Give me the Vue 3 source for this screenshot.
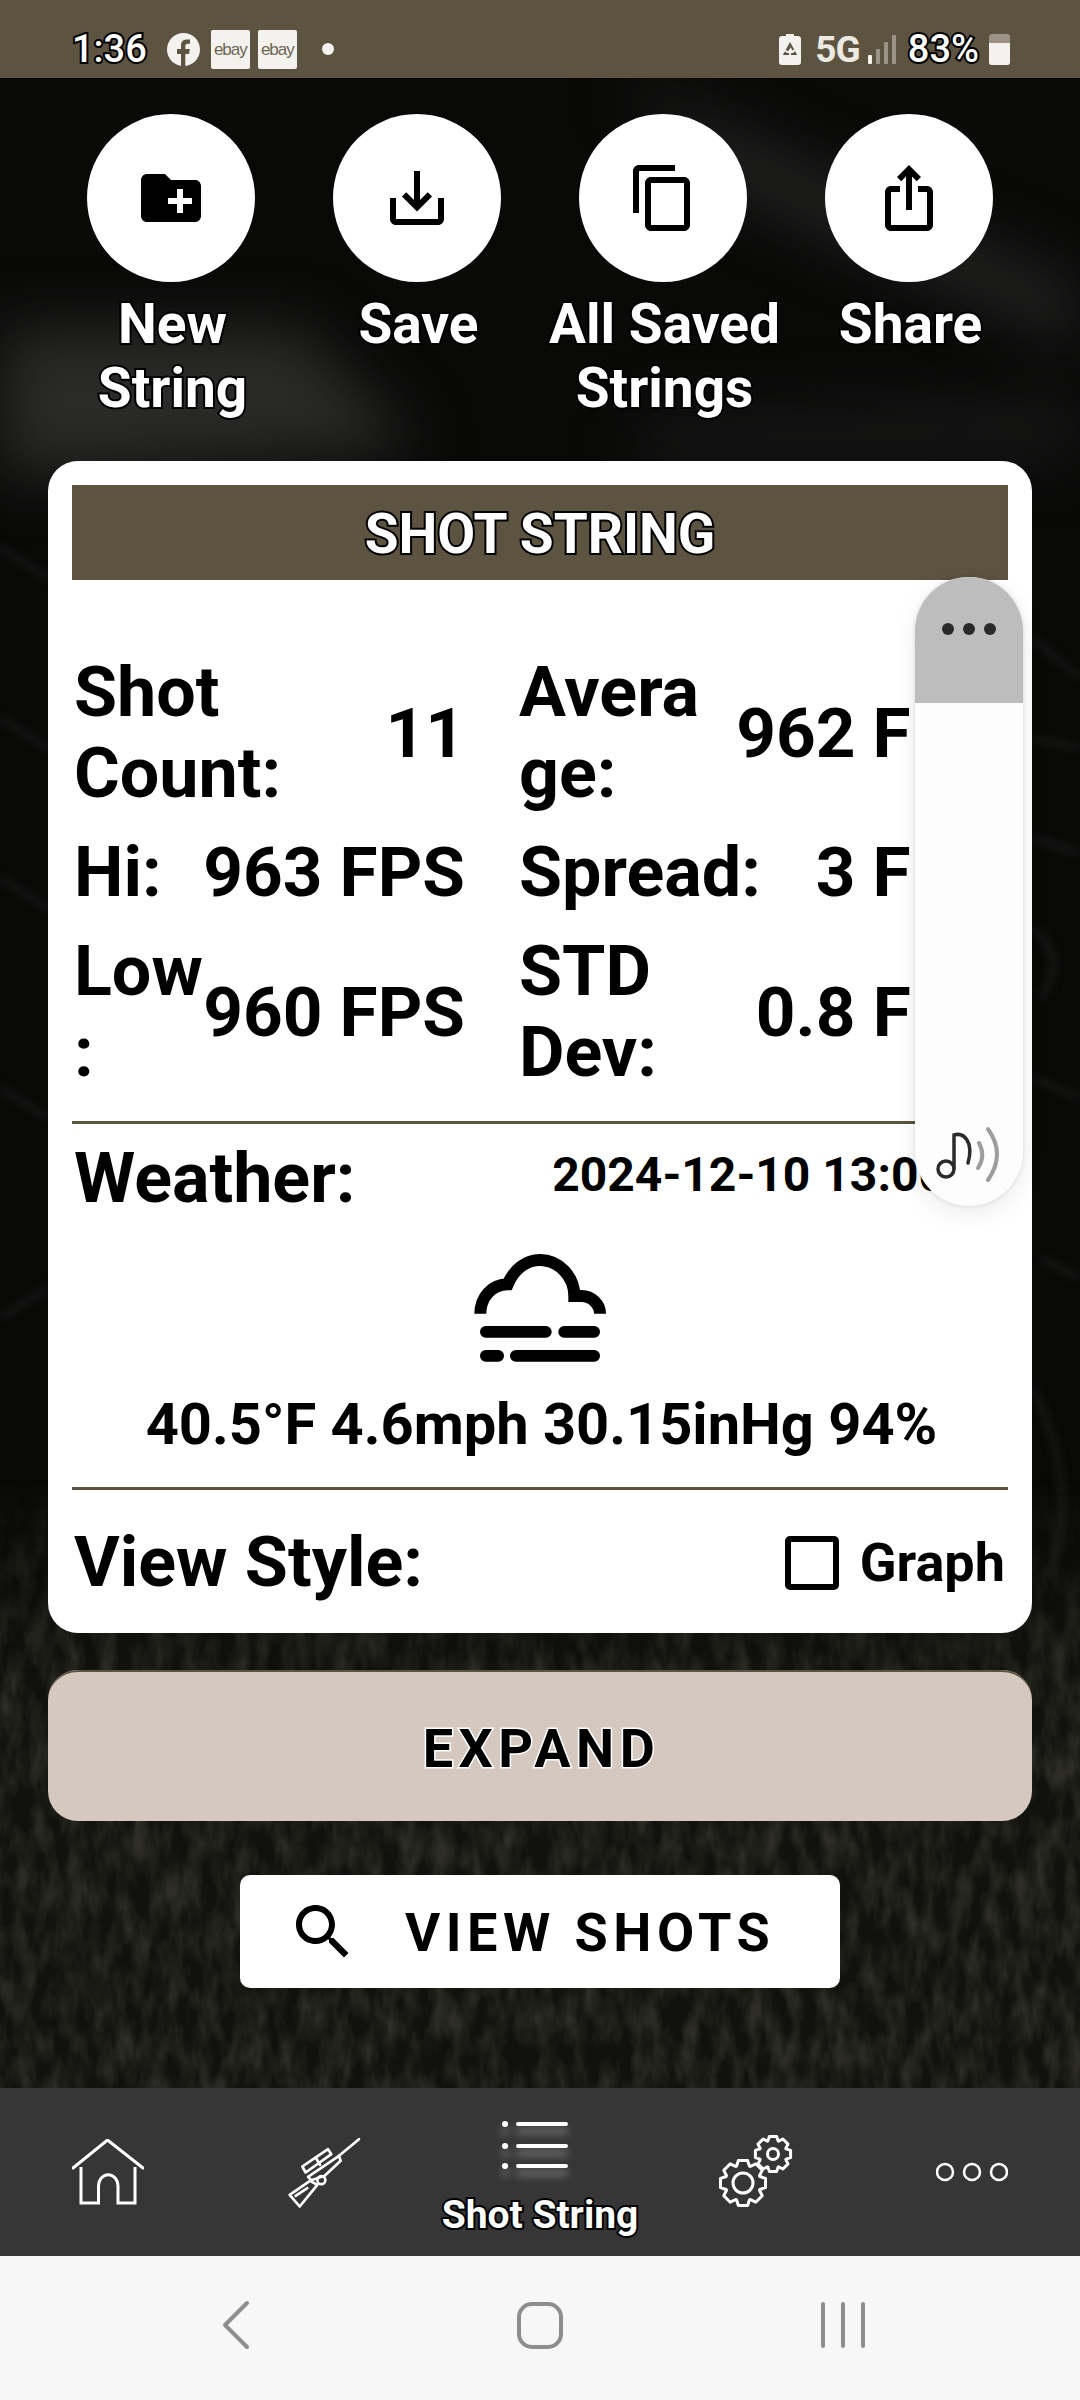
<template>
  <div class="phone">
    <div class="statusbar">
      <span class="time outlined">1:36</span>
      <svg class="fb" viewBox="0 0 33 33">
        <circle cx="16.5" cy="16.5" r="16.5" fill="#f3f2ef" />
        <path d="M14 33V21h-4v-5h4v-3.6C14 8.4 16.4 6.400 20 6.400c1.700 0 3 .2 3 .2v4.200h-2.200c-2 0-2.500 1.200-2.500 2.500V16h4.500l-.7 5h-3.800v12z" fill="#5c5340" />
      </svg>
      <span class="ebay">ebay</span>
      <span class="ebay">ebay</span>
      <span class="dot"></span>
      <span class="spacer"></span>
      <svg class="saver" viewBox="0 0 22 31">
        <path d="M7 0h8v2h4a3 3 0 0 1 3 3v23a3 3 0 0 1-3 3H3a3 3 0 0 1-3-3V5a3 3 0 0 1 3-3h4z" fill="#f3f2ef" />
        <path d="M11 10l-5.500 10h11zM8 17l3-4" fill="none" stroke="#5c5340" stroke-width="2" stroke-dasharray="7 2" />
      </svg>
      <span class="net">5G</span>
      <span class="signal">
        <i class="b1"></i><i class="b2"></i><i class="b3"></i><i class="b4"></i>
      </span>
      <span class="pct outlined">83%</span>
      <span class="battery"><i></i></span>
    </div>

    <div class="hero">
      <svg class="photo" viewBox="0 0 1080 2010" preserveAspectRatio="none">
        <defs>
          <filter id="soft" filterUnits="userSpaceOnUse" x="-200" y="-200" width="1500" height="2400" color-interpolation-filters="sRGB"><feGaussianBlur stdDeviation="30" /></filter>
          <filter id="soft2" filterUnits="userSpaceOnUse" x="-200" y="-200" width="1500" height="2400" color-interpolation-filters="sRGB"><feGaussianBlur stdDeviation="4" /></filter>
          <filter id="grass" x="0" y="0" width="100%" height="100%" color-interpolation-filters="sRGB">
            <feTurbulence type="fractalNoise" baseFrequency="0.06 0.024" numOctaves="3" seed="7" />
            <feColorMatrix type="matrix" values="0 0 0 0 .18  0 0 0 0 .18  0 0 0 0 .15  2.2 0 0 0 -.75" />
          </filter>
          <linearGradient id="fade" x1="0" y1="0" x2="0" y2="1">
            <stop offset="0" stop-color="#000" />
            <stop offset=".35" stop-color="#fff" />
            <stop offset="1" stop-color="#fff" />
          </linearGradient>
          <mask id="grassMask" maskUnits="userSpaceOnUse" x="0" y="1400" width="1080" height="610"><rect y="1400" width="1080" height="610" fill="url(#fade)" /></mask>
        </defs>
        <rect width="1080" height="2010" fill="#090908" />
        <path d="M0 250 L300 250 L420 370 L0 400z" fill="#2a2a28" filter="url(#soft)" />
        <path d="M620 0 L1080 210 L1080 270 L720 110z" fill="#232322" filter="url(#soft)" />
        <path d="M640 340 L1080 320 L1080 380 L640 390z" fill="#171716" filter="url(#soft)" />
        <g fill="none" stroke="#1c1c1b" stroke-width="5" filter="url(#soft2)">
          <path d="M0 470 L48 500M0 640 L48 670M0 800 L48 830M0 1010 L48 1040M0 1240 L48 1210" />
          <path d="M1032 560 L1080 600M1032 660 L1080 670M1032 760 L1080 775M1032 850 Q1070 880 1040 920M1032 1000 L1080 1020M1040 1180 L1080 1200M1032 1310 Q1080 1400 1050 1500" />
        </g>
        <rect y="1400" width="1080" height="610" fill="#11110e" mask="url(#grassMask)" />
        <rect y="1400" width="1080" height="610" filter="url(#grass)" mask="url(#grassMask)" />
      </svg>

      <div class="actions">
        <div v-for="a in actions" :key="a.label" class="action">
          <span class="round">
            <svg viewBox="0 0 24 24" class="round-icon"><path :d="a.icon" /></svg>
          </span>
          <span class="action-label outlined">{{ a.label }}</span>
        </div>
      </div>

      <div class="card">
        <div class="card-head outlined">SHOT STRING</div>
        <div class="stats">
          <div v-for="s in stats" :key="s.label" class="stat">
            <span class="stat-label">{{ s.label }}</span>
            <span class="stat-value">{{ s.value }}</span>
          </div>
        </div>
        <div class="rule"></div>
        <div class="weather-top">
          <span class="big">Weather:</span>
          <span class="date">2024-12-10 13:00</span>
        </div>
        <svg class="fog" viewBox="0 0 600 420">
          <path d="M121 248C121 200 155 160 203 160 222 115 258 87 300 87 355 87 403 135 403 195H425C455 195 480 220 480 248" fill="none" stroke="#000" stroke-width="36" />
          <rect x="120" y="285" width="215" height="35" rx="17" />
          <rect x="355" y="285" width="125" height="35" rx="17" />
          <rect x="120" y="357" width="72" height="35" rx="17" />
          <rect x="210" y="357" width="270" height="35" rx="17" />
        </svg>
        <div class="summary">40.5°F 4.6mph 30.15inHg 94%</div>
        <div class="rule"></div>
        <div class="view-row">
          <span class="big">View Style:</span>
          <span class="graph"><i class="check"></i>Graph</span>
        </div>
      </div>

      <div class="expand">EXPAND</div>

      <div class="view-shots">
        <svg viewBox="0 0 24 24" class="search"><path d="M15.500 14h-.79l-.28-.27C15.410 12.590 16 11.110 16 9.500 16 5.910 13.090 3 9.500 3S3 5.910 3 9.500 5.910 16 9.500 16c1.610 0 3.090-.59 4.230-1.570l.27.28v.79l5 4.990L20.490 19l-4.990-5zm-6 0C7.010 14 5 11.990 5 9.500S7.010 5 9.500 5 14 7.010 14 9.500 11.990 14 9.500 14z" /></svg>
        <span>VIEW SHOTS</span>
      </div>
    </div>

    <div class="tabs">
      <div class="tab">
        <svg width="72" height="66" viewBox="0 0 72 66" fill="none" stroke="#fff" stroke-width="3">
          <path d="M1 29L35.500 1 71 29" stroke-linecap="round" />
          <path d="M9 28V64H26.500V47A9.500 11 0 0 1 46 47V64H63V28" />
        </svg>
      </div>
      <div class="tab">
        <svg width="80" height="77" viewBox="100 100 240 230" fill="none" stroke="#fff" stroke-width="8" stroke-linejoin="round" stroke-linecap="round">
          <path d="M325 115L265 165" />
          <path d="M172 228L265 165 270 180 222 225 182 238z" />
          <path d="M155 197L232 145 242 160 165 215z" />
          <path d="M195 170L208 192" />
          <circle cx="212" cy="238" r="12" />
          <path d="M117 282L178 240 200 252 147 317z" />
          <path d="M135 285L170 262" />
        </svg>
      </div>
      <div class="tab tab-active">
        <svg class="list-icon" width="68" height="52" viewBox="0 0 68 52" fill="none" stroke="#fff" stroke-width="4" stroke-linecap="round">
          <path d="M16 3H64M16 25H64M16 45H64" />
          <path d="M3 3h.1M3 25h.1M3 45h.1" stroke-width="6" />
        </svg>
        <span class="tab-label outlined">Shot String</span>
      </div>
      <div class="tab">
        <svg width="76" height="76" viewBox="0 0 76 76" fill="none" stroke="#fff" stroke-width="3" stroke-linejoin="round">
          <path :d="gearBig" />
          <circle cx="25" cy="49" r="10" />
          <path :d="gearSmall" />
          <circle cx="55" cy="20" r="5.500" />
        </svg>
      </div>
      <div class="tab">
        <svg width="72" height="20" viewBox="0 0 72 20" fill="none" stroke="#fff" stroke-width="2.500">
          <ellipse cx="9" cy="10" rx="8" ry="8" />
          <ellipse cx="36" cy="10" rx="8" ry="8" />
          <ellipse cx="63" cy="10" rx="8" ry="8" />
        </svg>
      </div>
    </div>

    <div class="sysnav">
      <svg width="30" height="50" viewBox="0 0 30 50" fill="none" stroke="#8e8e8e" stroke-width="4" stroke-linecap="round" stroke-linejoin="round"><path d="M25 3L3 25 25 47" /></svg>
      <span class="sys-home"></span>
      <span class="sys-recent"><i></i><i></i><i></i></span>
    </div>

    <div class="sound-panel">
      <div class="panel-top"><i></i><i></i><i></i></div>
      <svg class="note" width="68" height="58" viewBox="0 0 68 58" fill="none" stroke-linecap="round">
        <circle cx="10" cy="43" r="8" stroke="#2b2b2b" stroke-width="3.500" />
        <path d="M18 42V9C28 6 38 16 32 37" stroke="#2b2b2b" stroke-width="3.500" />
        <path d="M43 17Q50 30 42 42" stroke="#9d9d9d" stroke-width="4" />
        <path d="M52 3Q70 28 52 54" stroke="#9d9d9d" stroke-width="4" />
      </svg>
    </div>
  </div>
</template>

<script setup>
const actions = [
  { label: "New String", icon: "M20 6h-8l-2-2H4c-1.110 0-1.990.89-1.990 2L2 18c0 1.110.89 2 2 2h16c1.110 0 2-.89 2-2V8c0-1.110-.89-2-2-2zm-1 8h-3v3h-2v-3h-3v-2h3V9h2v3h3v2z" },
  { label: "Save", icon: "M19 12v7H5v-7H3v7c0 1.100.9 2 2 2h14c1.100 0 2-.9 2-2v-7h-2zm-6 .67l2.590-2.580L17 11.500l-5 5-5-5 1.410-1.410L11 12.670V3h2z" },
  { label: "All Saved Strings", icon: "M16 1H4c-1.100 0-2 .9-2 2v14h2V3h12V1zm3 4H8c-1.100 0-2 .9-2 2v14c0 1.100.9 2 2 2h11c1.100 0 2-.9 2-2V7c0-1.100-.9-2-2-2zm0 16H8V7h11v14z" },
  { label: "Share", icon: "M16 5l-1.420 1.420-1.590-1.590V16h-1.980V4.830L9.420 6.420 8 5l4-4 4 4zm4 5v11c0 1.100-.9 2-2 2H6c-1.110 0-2-.9-2-2V10c0-1.110.89-2 2-2h3v2H6v11h12V10h-3V8h3c1.100 0 2 .89 2 2z" },
];

const stats = [
  { label: "Shot Count:", value: "11" },
  { label: "Average:", value: "962 FPS" },
  { label: "Hi:", value: "963 FPS" },
  { label: "Spread:", value: "3 FPS" },
  { label: "Low:", value: "960 FPS" },
  { label: "STD Dev:", value: "0.8 FPS" },
];

// 8 tooth gear outline, the round line join softens the corners
const gear = (cx, cy, outer, inner) => {
  const pts = [];
  for (let i = 0; i < 8; i++) {
    const a = (i * Math.PI) / 4 - Math.PI / 2;
    const w = 0.2;
    [[inner, a - 0.39 + 0.02], [outer, a - w], [outer, a + w], [inner, a + 0.37]].forEach(([r, t]) => {
      pts.push((cx + r * Math.cos(t)).toFixed(1) + " " + (cy + r * Math.sin(t)).toFixed(1));
    });
  }
  return "M" + pts.join("L") + "z";
};
const gearBig = gear(25, 49, 23, 18);
const gearSmall = gear(55, 20, 18, 14);
</script>

<style scoped>
.phone {
  position: relative;
  width: 1080px;
  height: 2400px;
  display: flex;
  flex-direction: column;
  overflow: hidden;
  font-family: Roboto, "Liberation Sans", sans-serif;
  color: #000;
}

.outlined {
  color: #fff;
  -webkit-text-stroke: 4px #000;
  paint-order: stroke fill;
}

.statusbar {
  height: 78px;
  flex: none;
  background: #5c5340;
  display: flex;
  align-items: center;
  padding: 20px 70px 0 72px;
  box-sizing: border-box;
}
.time, .pct {
  font-size: 38px;
  font-weight: 500;
  line-height: 44px;
}
.fb {
  width: 33px;
  height: 33px;
  margin-left: 20px;
}
.ebay {
  width: 39px;
  height: 39px;
  margin-left: 8px;
  background: #f3f2ef;
  border-radius: 2px;
  font: 17px/39px "Liberation Sans", sans-serif;
  letter-spacing: -1px;
  color: #6d6552;
  text-align: center;
}
.fb + .ebay {
  margin-left: 11px;
}
.dot {
  width: 12px;
  height: 12px;
  border-radius: 50%;
  background: #f3f2ef;
  margin-left: 25px;
}
.spacer {
  flex: 1;
}
.saver {
  width: 22px;
  height: 31px;
}
.net {
  margin-left: 14px;
  font-size: 37px;
  font-weight: 700;
  color: #ece9e2;
  letter-spacing: -1px;
}
.signal {
  display: flex;
  align-items: flex-end;
  gap: 4px;
  height: 29px;
  margin-left: 8px;
}
.signal i {
  width: 4px;
  background: #9b9486;
  border-radius: 1px;
}
.signal .b1 { height: 9px; background: #f3f2ef; }
.signal .b2 { height: 15px; }
.signal .b3 { height: 22px; }
.signal .b4 { height: 29px; }
.pct {
  margin-left: 12px;
}
.battery {
  width: 21px;
  height: 31px;
  margin-left: 10px;
  border-radius: 3px;
  background: #9b9486;
  display: flex;
  align-items: flex-end;
}
.battery i {
  width: 100%;
  height: 22px;
  background: #f3f2ef;
  border-radius: 0 0 3px 3px;
}

.hero {
  position: relative;
  height: 2010px;
  flex: none;
  display: flex;
  flex-direction: column;
  align-items: center;
  padding: 36px 48px 0;
  box-sizing: border-box;
}
.photo {
  position: absolute;
  inset: 0;
  width: 100%;
  height: 100%;
}
.actions {
  position: relative;
  width: 984px;
  height: 347px;
  flex: none;
  display: grid;
  grid-template-columns: repeat(4, 1fr);
}
.action {
  display: flex;
  flex-direction: column;
  align-items: center;
}
.round {
  width: 168px;
  height: 168px;
  border-radius: 50%;
  background: #fff;
  display: flex;
  align-items: center;
  justify-content: center;
}
.round-icon {
  width: 72px;
  height: 72px;
}
.action-label {
  margin-top: 10px;
  width: 240px;
  padding-left: 3px;
  text-align: center;
  font-size: 55px;
  line-height: 64px;
  font-weight: 700;
}

.card {
  position: relative;
  width: 984px;
  height: 1172px;
  flex: none;
  box-sizing: border-box;
  background: #fff;
  border-radius: 30px;
  padding: 24px;
}
.card-head {
  height: 95px;
  background: #5c5340;
  text-align: center;
  font-size: 55px;
  font-weight: 700;
  line-height: 98px;
}
.stats {
  display: grid;
  grid-template-columns: 391px 479px;
  column-gap: 54px;
  row-gap: 18px;
  padding: 72px 0 0 2px;
}
.stat {
  display: flex;
  justify-content: space-between;
  align-items: center;
  font-size: 70px;
  line-height: 81px;
  font-weight: 700;
}
.stat-label {
  min-width: 0;
  overflow-wrap: anywhere;
}
.stat-value {
  flex: none;
  font-size: 69.300px;
}
.rule {
  height: 3px;
  background: #5c5340;
  margin-top: 28px;
}
.weather-top {
  display: flex;
  justify-content: space-between;
  align-items: center;
  padding: 14px 62px 0 2px;
}
.big {
  font-size: 70px;
  line-height: 81px;
  font-weight: 700;
}
.date {
  font-size: 48px;
  font-weight: 700;
  white-space: nowrap;
  margin-bottom: 8px;
}
.fog {
  display: block;
  width: 200px;
  height: 140px;
  margin: 12px auto 0;
}
.summary {
  margin-top: 20px;
  padding-left: 3px;
  text-align: center;
  font-size: 57.800px;
  line-height: 66px;
  font-weight: 700;
}
.summary + .rule {
  margin-top: 30px;
}
.view-row {
  display: flex;
  justify-content: space-between;
  align-items: center;
  padding: 32px 3px 0 2px;
}
.graph {
  display: flex;
  align-items: center;
  font-size: 54px;
  font-weight: 700;
}
.check {
  width: 54px;
  height: 54px;
  box-sizing: border-box;
  border: 6px solid #000;
  border-radius: 5px;
  margin-right: 21px;
}

.expand {
  position: relative;
  width: 984px;
  height: 151px;
  flex: none;
  margin-top: 37px;
  padding-left: 3px;
  box-sizing: border-box;
  background: #d5c9bf;
  border-radius: 30px;
  box-shadow: inset 0 3px 0 -1px #5c5340;
  text-align: center;
  font-size: 54px;
  font-weight: 700;
  line-height: 157px;
  letter-spacing: 5.500px;
  -webkit-text-stroke: 3px #fff;
  paint-order: stroke fill;
}
.view-shots {
  position: relative;
  width: 600px;
  height: 113px;
  flex: none;
  margin-top: 54px;
  background: #fff;
  border-radius: 10px;
  display: flex;
  align-items: center;
  padding: 2px 0 0 47px;
  box-sizing: border-box;
  font-size: 54px;
  font-weight: 700;
  letter-spacing: 5.500px;
}
.search {
  width: 72px;
  height: 72px;
  margin: -2px 46px 0 0;
}

.tabs {
  height: 168px;
  flex: none;
  background: #363636;
  display: grid;
  grid-template-columns: repeat(5, 216px);
}
.tab {
  display: flex;
  flex-direction: column;
  align-items: center;
  justify-content: center;
}
.tab-active {
  justify-content: flex-start;
  padding-top: 33px;
}
.list-icon {
  margin-left: -8px;
  filter: drop-shadow(0 7px 4px rgba(255, 255, 255, 0.45));
}
.tab-label {
  margin-top: 20px;
  font-size: 39px;
  line-height: 44px;
  font-weight: 700;
  white-space: nowrap;
}

.sysnav {
  height: 144px;
  flex: none;
  box-sizing: border-box;
  background: #f7f7f7;
  position: relative;
  display: grid;
  grid-template-columns: repeat(3, 1fr);
  padding: 0 86px 6px;
  align-items: center;
  justify-items: center;
}
.sys-home {
  width: 46px;
  height: 47px;
  box-sizing: border-box;
  border: 4px solid #8e8e8e;
  border-radius: 15px;
}
.sys-recent {
  display: flex;
  gap: 16px;
}
.sys-recent i {
  width: 4px;
  height: 46px;
  background: #8e8e8e;
  border-radius: 2px;
}

.sound-panel {
  position: absolute;
  left: 915px;
  top: 577px;
  width: 108px;
  height: 629px;
  border-radius: 54px;
  background: #fdfdfd;
  overflow: hidden;
  box-shadow: 0 0 4px rgba(0, 0, 0, 0.12), 0 8px 24px rgba(0, 0, 0, 0.08);
}
.panel-top {
  height: 126px;
  background: #bdbdbd;
  display: flex;
  gap: 9px;
  justify-content: center;
  padding-top: 46px;
  box-sizing: border-box;
}
.panel-top i {
  width: 12px;
  height: 12px;
  border-radius: 50%;
  background: #2a2a2a;
}
.note {
  position: absolute;
  left: 21px;
  bottom: 22px;
}
</style>

<style>
html, body {
  margin: 0;
  background: #000;
}
</style>
